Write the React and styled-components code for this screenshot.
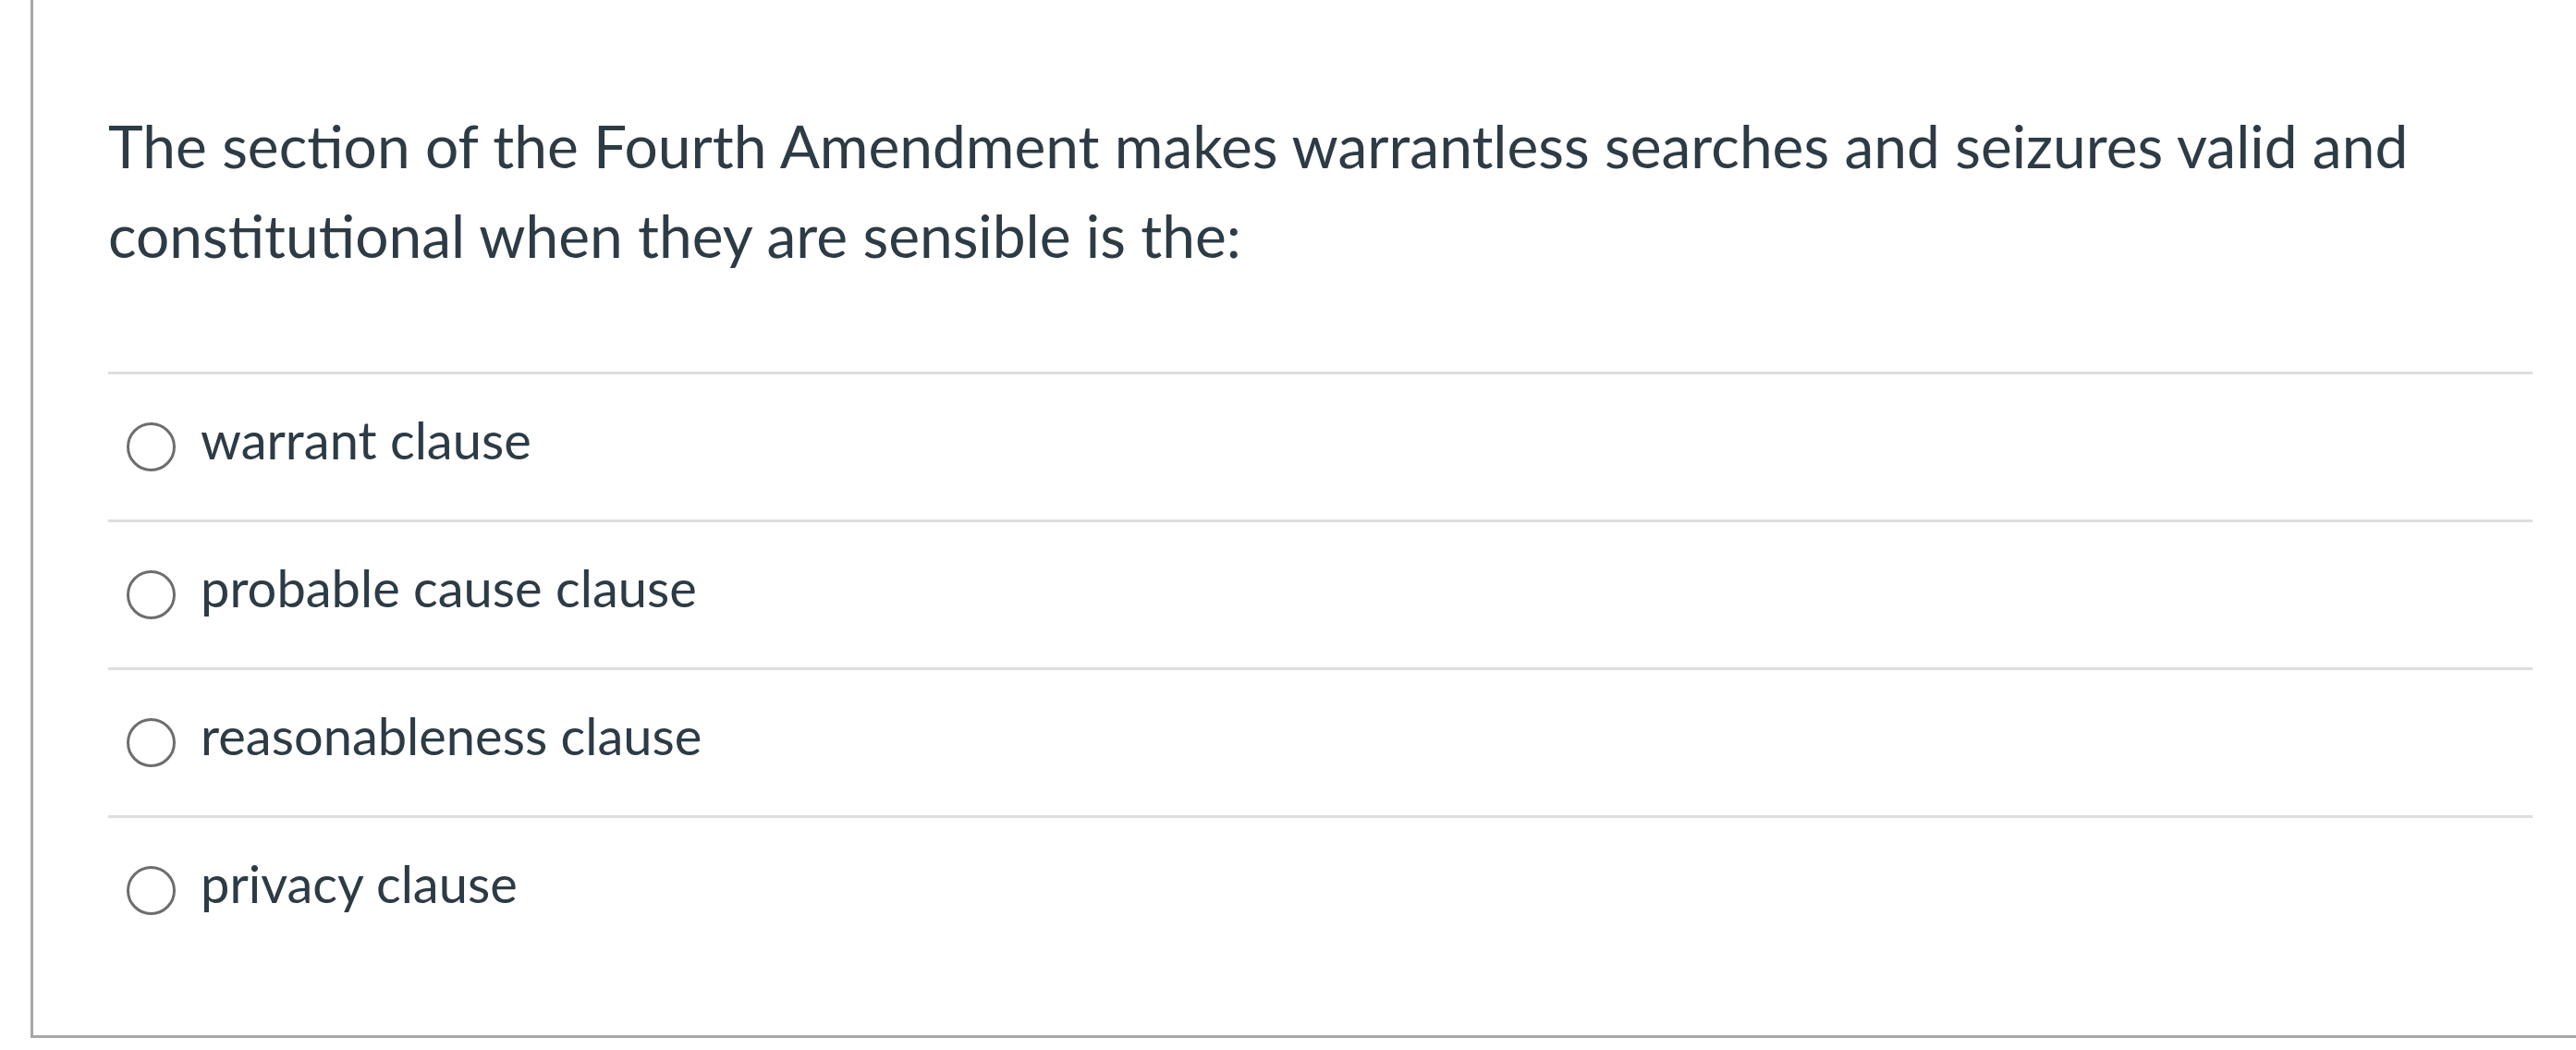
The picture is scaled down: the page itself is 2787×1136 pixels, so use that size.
import styled, { createGlobalStyle } from 'styled-components';

const GlobalStyle = createGlobalStyle`
  html, body {
    margin: 0;
    padding: 0;
    background: #ffffff;
    overflow: hidden;
  }
  body {
    font-family: Lato, "Open Sans", "Liberation Sans", sans-serif;
    color: #2d3b45;
  }
`;

const options = [
  'warrant clause',
  'probable cause clause',
  'reasonableness clause',
  'privacy clause',
];

const App = () => {
  return (
    <>
      <GlobalStyle />
      <Page>
        <QuizBox>
          <Question>
            The section of the Fourth Amendment makes warrantless searches and seizures valid and
            constitutional when they are sensible is the:
          </Question>
          <Answers>
            {options.map((text) => (
              <Answer key={text}>
                <Radio />
                <AnswerText>{text}</AnswerText>
              </Answer>
            ))}
          </Answers>
        </QuizBox>
      </Page>
    </>
  );
};

const Page = styled.div`
  width: 2787px;
  height: 1136px;
  padding-left: 33px;
  box-sizing: border-box;
  overflow: hidden;
`;

const QuizBox = styled.div`
  width: 2800px;
  border-left: 3px solid #a6a6a6;
  border-bottom: 3px solid #a6a6a6;
  padding: 109px 0 78px 81px;
  box-sizing: border-box;
`;

const Question = styled.div`
  width: 2623px;
  font-size: 64px;
  line-height: 97px;
  margin-bottom: 99px;
`;

const Answers = styled.div`
  width: 2623px;
  display: flex;
  flex-direction: column;
`;

const Answer = styled.label`
  display: flex;
  align-items: center;
  height: 160px;
  box-sizing: border-box;
  border-top: 3px solid #dedede;
  padding-left: 20px;
  gap: 27px;
`;

const Radio = styled.span`
  display: block;
  width: 53px;
  height: 53px;
  border-radius: 50%;
  border: 3px solid #6d6d6d;
  box-sizing: border-box;
  flex-shrink: 0;
`;

const AnswerText = styled.span`
  font-size: 56px;
  line-height: 56px;
  padding-bottom: 16px;
`;

export default App;
